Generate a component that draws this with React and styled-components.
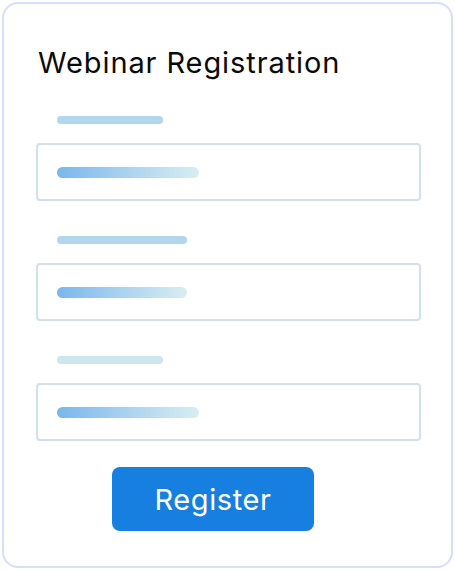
import styled, { createGlobalStyle } from "styled-components";

const GlobalStyle = createGlobalStyle`
  body {
    margin: 0;
    background: #ffffff;
    font-family: "Inter", "Noto Sans", sans-serif;
  }
`;

const Card = styled.div`
  box-sizing: border-box;
  width: 451px;
  height: 566px;
  margin: 2px;
  border: 2px solid #d6dfff;
  border-radius: 16px;
  background: #ffffff;
  padding: 41px 30px 0 32px;
  display: flex;
  flex-direction: column;
`;

const Title = styled.h1`
  margin: 0 0 0 2px;
  font-size: 29px;
  line-height: 35px;
  font-weight: 400;
  color: #0a0a0a;
  letter-spacing: 0.9px;
`;

const Fields = styled.div`
  margin-top: 36px;
  display: flex;
  flex-direction: column;
  gap: 35px;
`;

const Field = styled.div`
  display: flex;
  flex-direction: column;
`;

const LabelBar = styled.div`
  width: ${(p) => p.w}px;
  height: 8px;
  margin-left: 21px;
  margin-bottom: 19px;
  border-radius: 4px;
  background: ${(p) => (p.light ? "#cde6f0" : "#b2d6ee")};
`;

const InputBox = styled.div`
  box-sizing: border-box;
  height: 58px;
  border: 2px solid #d3dfeb;
  border-radius: 4px;
  padding-left: 19px;
  display: flex;
  align-items: center;
`;

const ValueBar = styled.div`
  width: ${(p) => p.w}px;
  height: 11px;
  border-radius: 6px;
  background: linear-gradient(90deg, #7ab6ec 0%, #a6d0ef 45%, #d8edf1 100%);
`;

const Button = styled.button`
  margin: 26px 0 0 76px;
  width: 202px;
  height: 64px;
  border: none;
  border-radius: 8px;
  background: #167fe0;
  color: #ffffff;
  font-family: "Inter", "Noto Sans", sans-serif;
  font-size: 29px;
  font-weight: 400;
  letter-spacing: 0.6px;
  cursor: pointer;
`;

const fields = [
  { label: 106, value: 142 },
  { label: 130, value: 130 },
  { label: 106, value: 142, light: true },
];

const App = () => {
  return (
    <>
      <GlobalStyle />
      <Card>
        <Title>Webinar Registration</Title>
        <Fields>
          {fields.map((f, i) => (
            <Field key={i}>
              <LabelBar w={f.label} light={f.light} />
              <InputBox>
                <ValueBar w={f.value} />
              </InputBox>
            </Field>
          ))}
        </Fields>
        <Button>Register</Button>
      </Card>
    </>
  );
};

export default App;
